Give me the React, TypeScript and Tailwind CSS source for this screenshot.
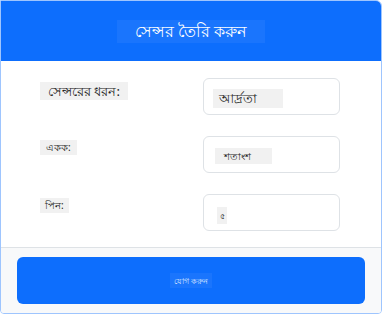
const fields = [
  {
    label: "সেন্সরের ধরন:",
    value: "আর্দ্রতা",
    labelCls: "h-[18px] text-[13px] leading-[18px] px-[8px]",
    valueCls: "h-[19px] w-[70px] text-[13px] leading-[19px] pl-[6px] mt-[3px]",
  },
  {
    label: "একক:",
    value: "শতাংশ",
    labelCls: "h-[15px] text-[10px] leading-[15px] px-[6px]",
    valueCls: "h-[16px] w-[57px] text-[10px] leading-[16px] pl-[9px] ml-[2px] mt-[3px]",
  },
  {
    label: "পিন:",
    value: "৫",
    labelCls: "h-[15px] text-[10px] leading-[15px] px-[5px]",
    valueCls: "h-[17px] w-[10px] text-[8px] leading-[17px] text-center ml-[4px] mt-[6px]",
  },
];

export default function App() {
  return (
    <div className="w-[383px] h-[314px] bg-white font-['Noto_Sans',sans-serif]">
      <div className="h-[314px] w-[382px] border border-[#9ec5fe] rounded-tr-md rounded-b-sm overflow-hidden flex flex-col">
        <div className="h-[60px] bg-[#0d6efd] flex items-center justify-center">
          <span className="inline-block bg-[#1a75fd] text-white text-[16px] leading-[23px] w-[148px] text-center">
            সেন্সর তৈরি করুন
          </span>
        </div>
        <div className="flex-1 bg-white px-[39px] pt-[17px] flex flex-col gap-[21px]">
          {fields.map((f) => (
            <div key={f.label} className="grid grid-cols-[163px_137px] items-start">
              <div className="pt-[4px] flex">
                <span className={"inline-block bg-[#f1f1f1] text-[#222] " + f.labelCls}>
                  {f.label}
                </span>
              </div>
              <div className="h-[37px] border border-[#dee2e6] rounded-md flex items-center px-[9px]">
                <span className={"inline-block bg-[#f1f1f1] text-[#222] " + f.valueCls}>
                  {f.value}
                </span>
              </div>
            </div>
          ))}
        </div>
        <div className="h-[66px] bg-[#f8f9fa] border-t border-[#dee2e6] px-[16px] pt-[9px]">
          <button className="w-[348px] h-[47px] bg-[#0d6efd] rounded-md flex items-center justify-center">
            <span className="inline-block bg-[#1a75fd] text-[#dbe8ff] text-[8px] leading-[15px] px-[4px]">
              যোগ করুন
            </span>
          </button>
        </div>
      </div>
    </div>
  );
}
